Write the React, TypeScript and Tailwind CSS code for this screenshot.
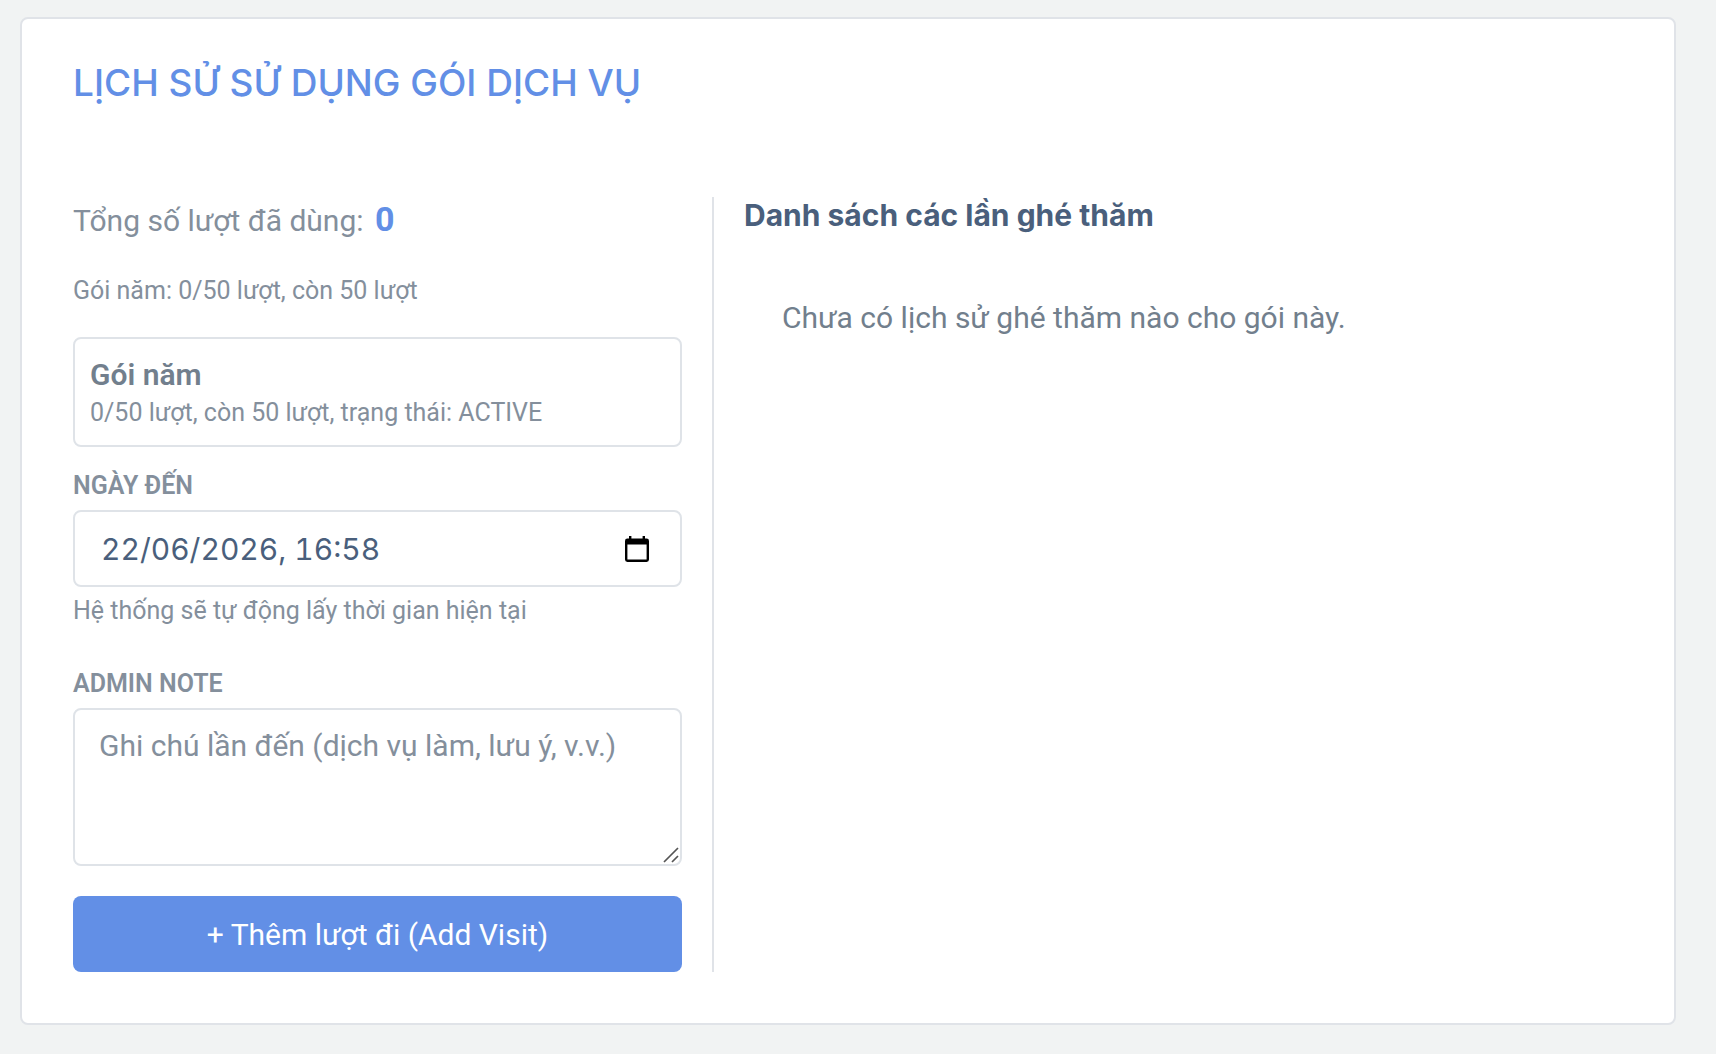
import { useState } from "react";

function CalendarIcon() {
  return (
    <svg viewBox="0 0 24 26" className="h-[26px] w-6" aria-hidden="true">
      <path
        fill="#000"
        fillRule="evenodd"
        d="M4 0h2.4v2.6h11.2V0H20v2.6h1.6A2.4 2.4 0 0 1 24 5v18.6a2.4 2.4 0 0 1-2.4 2.4H2.4A2.4 2.4 0 0 1 0 23.6V5a2.4 2.4 0 0 1 2.4-2.4H4zM2.4 8.4v15.2h19.2V8.4z"
      />
    </svg>
  );
}

function ResizeGrip() {
  return (
    <svg
      viewBox="0 0 16 16"
      className="pointer-events-none absolute right-[3px] bottom-[3px] size-4"
      aria-hidden="true"
    >
      <path d="M1 15L15 1M9 15l6-6" stroke="#555" strokeWidth="1.7" fill="none" />
    </svg>
  );
}

export default function App() {
  const [date, setDate] = useState("22/06/2026, 16:58");
  const [note, setNote] = useState("");

  return (
    <div className="min-h-screen bg-[#f1f3f3] pt-[17px] pr-10 pb-7 pl-5 font-['Roboto',sans-serif] text-[30px] leading-[44px] text-[#727f8d]">
      <section className="rounded-lg border-2 border-[#e0e3e8] bg-white px-[51px] pt-10 pb-[51px]">
        <h1 className="font-['Inter',sans-serif] text-[37px] leading-[48px] font-medium text-[#628fe6]">
          LỊCH SỬ SỬ DỤNG GÓI DỊCH VỤ
        </h1>

        <div className="mt-[90px] grid grid-cols-[641fr_909fr]">
          <div className="border-r-2 border-[#e0e3e8] pr-[30px]">
            <p className="text-[#848f9c]">
              Tổng số lượt đã dùng:{" "}
              <strong className="ml-1 text-[34px] font-bold text-[#628fe6]">0</strong>
            </p>
            <p className="mt-[30px] text-[25px] leading-9 text-[#848f9c]">
              Gói năm: 0/50 lượt, còn 50 lượt
            </p>

            <div className="mt-7 rounded-lg border-2 border-[#dfe3e8] px-[15px] pt-4 pb-[14px]">
              <div className="leading-10 font-semibold">Gói năm</div>
              <div className="text-[25px] leading-9 text-[#848f9c]">
                0/50 lượt, còn 50 lượt, trạng thái: ACTIVE
              </div>
            </div>

            <label
              htmlFor="visit-date"
              className="mt-[21px] block text-[25px] leading-9 font-semibold text-[#848f9c]"
            >
              NGÀY ĐẾN
            </label>
            <div className="mt-1.5 flex h-[77px] items-center rounded-lg border-2 border-[#dfe3e8] pr-[31px] pl-[26px] text-[#4a5f7c]">
              <input
                id="visit-date"
                type="text"
                value={date}
                onChange={(e) => setDate(e.target.value)}
                className="min-w-0 flex-1 bg-transparent font-['Inter',sans-serif] tabular-nums outline-none"
              />
              <button type="button" aria-label="Chọn ngày">
                <CalendarIcon />
              </button>
            </div>
            <p className="mt-1.5 text-[25px] leading-9 text-[#848f9c]">
              Hệ thống sẽ tự động lấy thời gian hiện tại
            </p>

            <label
              htmlFor="admin-note"
              className="mt-[37px] block text-[25px] leading-9 font-semibold text-[#848f9c]"
            >
              ADMIN NOTE
            </label>
            <div className="relative mt-1.5">
              <textarea
                id="admin-note"
                value={note}
                onChange={(e) => setNote(e.target.value)}
                placeholder="Ghi chú lần đến (dịch vụ làm, lưu ý, v.v.)"
                className="block h-[158px] w-full resize-none rounded-lg border-2 border-[#dfe3e8] px-6 py-[14px] text-[#4a5f7c] outline-none placeholder:text-[#848f9c]"
              />
              <ResizeGrip />
            </div>

            <button
              type="button"
              className="mt-[30px] h-[76px] w-full rounded-lg bg-[#628fe6] pt-px text-white"
            >
              + Thêm lượt đi (Add Visit)
            </button>
          </div>

          <div className="pl-[30px]">
            <h2 className="font-['Inter',sans-serif] text-[30px] leading-9 font-bold text-[#4a5f7c]">
              Danh sách các lần ghé thăm
            </h2>
            <p className="mt-[63px] pl-[38px]">Chưa có lịch sử ghé thăm nào cho gói này.</p>
          </div>
        </div>
      </section>
    </div>
  );
}
